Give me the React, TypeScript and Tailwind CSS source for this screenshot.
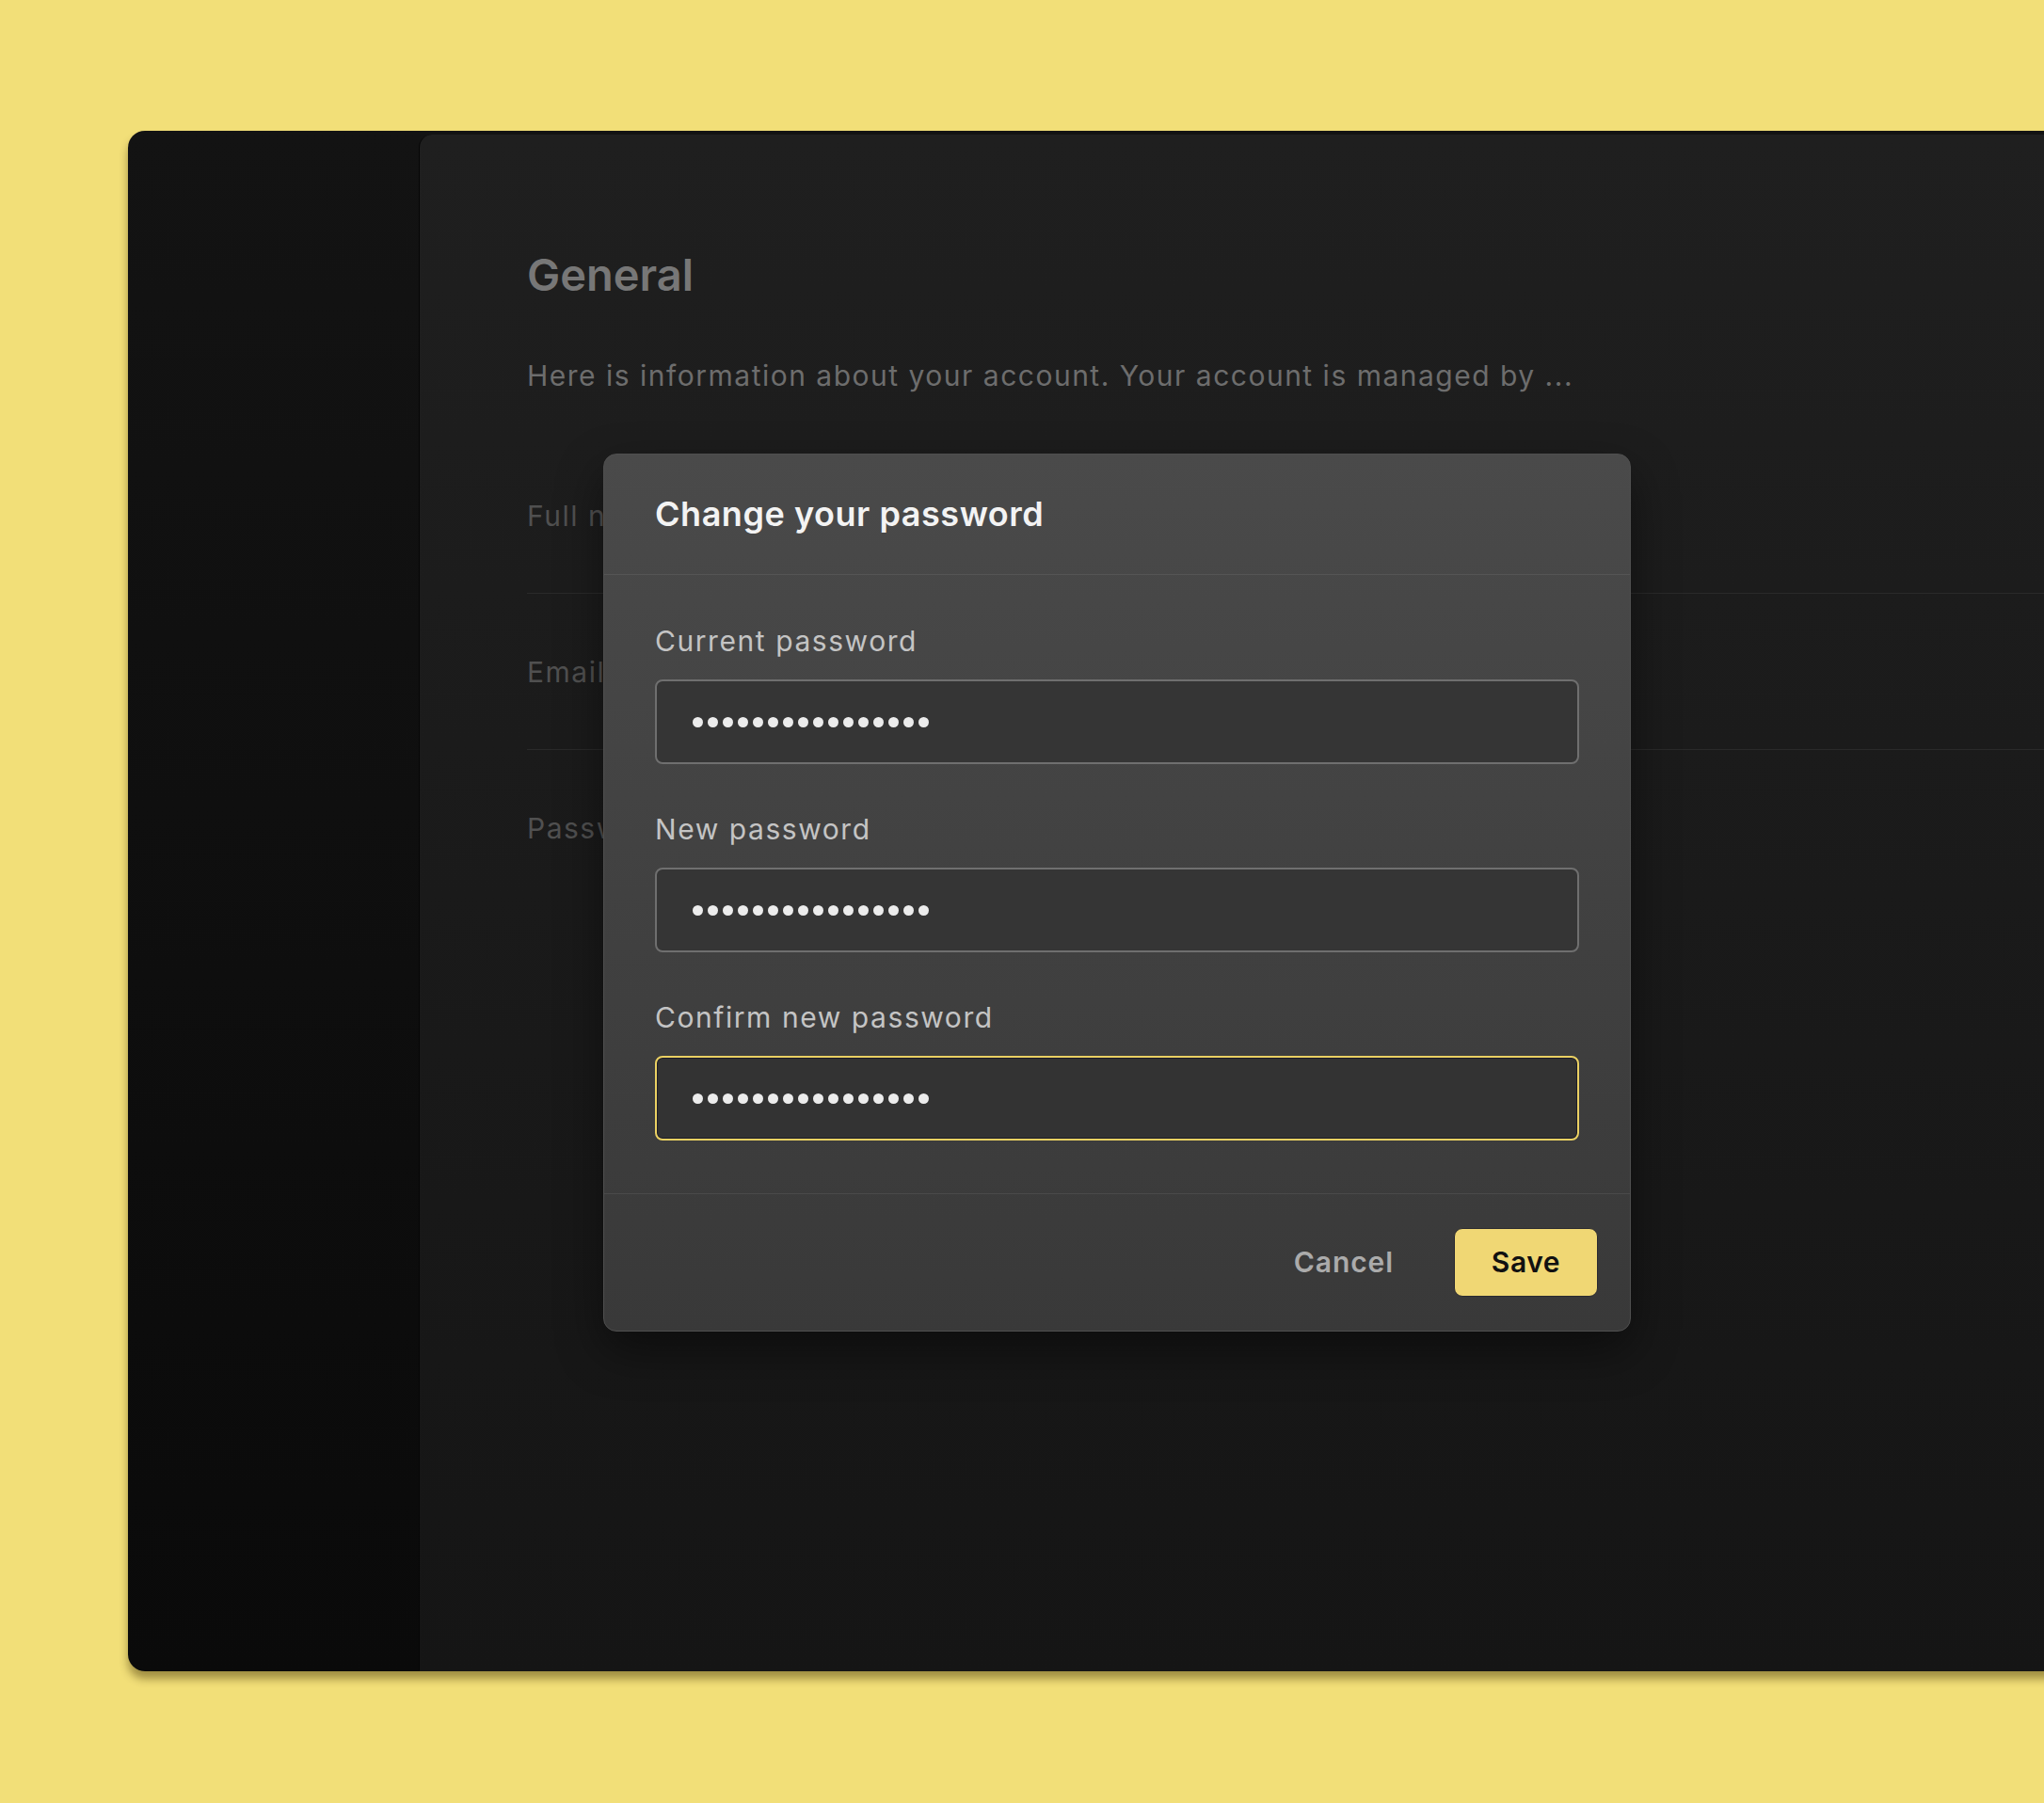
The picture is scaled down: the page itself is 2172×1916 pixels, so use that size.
const rows = ["Full name", "Email", "Password"];

const fields = [
  { id: 1, label: "Current password", focused: false },
  { id: 2, label: "New password", focused: false },
  { id: 3, label: "Confirm new password", focused: true },
];

const Dots = () => (
  <div className="flex items-center gap-[5px]">
    {Array.from({ length: 16 }).map((_, i) => (
      <span key={i} className="block w-[11px] h-[11px] rounded-full bg-[#ececec]" />
    ))}
  </div>
);

const PasswordModal = () => {
  return (
    <div className="absolute left-[641px] top-[482px] w-[1092px] rounded-[14px] border border-[#4f4f4f] bg-gradient-to-b from-[#4a4a4a] via-[#414141] to-[#393939] shadow-[0_20px_50px_rgba(0,0,0,0.45)] overflow-hidden">
      <div className="h-[128px] flex items-center px-[54px] border-b border-[#555555]">
        <h2 className="text-[36px] leading-[44px] font-semibold tracking-[0.015em] text-[#f3f3f3] pb-[2px]">
          Change your password
        </h2>
      </div>
      <div className="px-[54px] pt-[50px] pb-[56px] border-b border-[#4a4a4a] flex flex-col gap-[49px]">
        {fields.map((f) => (
          <div key={f.id} className="flex flex-col gap-[21px]">
            <label className="text-[30px] leading-[40px] tracking-[0.052em] text-[#c4c4c4]">{f.label}</label>
            <div
              className={
                f.focused
                  ? "h-[90px] rounded-[8px] border-2 border-[#ebd162] bg-[#333333] shadow-[inset_0_0_0_1px_#1c1c28] flex items-center pl-[38px]"
                  : "h-[90px] rounded-[8px] border-2 border-[#6f6f6f] bg-[#353535] flex items-center pl-[38px]"
              }
            >
              <Dots />
            </div>
          </div>
        ))}
      </div>
      <div className="h-[145px] flex items-center justify-end pr-[34px]">
        <button className="mr-[64px] text-[30px] font-semibold tracking-[0.03em] text-[#ababab]">Cancel</button>
        <button className="w-[153px] h-[73px] rounded-[9px] bg-[#f0d774] border border-[#2a2a30] text-[30px] font-semibold tracking-[0.02em] text-[#111111]">
          Save
        </button>
      </div>
    </div>
  );
};

export default function App() {
  return (
    <div className="relative w-[2172px] h-[1916px] overflow-hidden bg-[#f2df78] font-['Inter','Liberation_Sans',sans-serif]">
      <div className="ml-[136px] mt-[139px] w-[2200px] h-[1637px] flex rounded-[18px] bg-gradient-to-b from-[#131313] to-[#0a0a0a] shadow-[0_8px_10px_rgba(60,45,0,0.45)]">
        <aside className="w-[309px] shrink-0" />
        <main className="flex-1 mt-[4px] rounded-tl-[14px] border-l border-[#060606] bg-gradient-to-b from-[#1f1f1f] to-[#151515] pl-[114px] pt-[120px]">
          <h1 className="text-[47px] leading-[58px] font-semibold text-[#777777]">General</h1>
          <p className="mt-[60px] text-[30px] leading-[36px] tracking-[0.05em] text-[#6d6d6d]">
            Here is information about your account. Your account is managed by ...
          </p>
          <div className="mt-[48px]">
            {rows.map((r, i) => (
              <div
                key={r}
                className={
                  i < 2
                    ? "h-[166px] flex items-center border-b border-[#2a2a2a]"
                    : "h-[166px] flex items-center"
                }
              >
                <span className="text-[30px] leading-[36px] tracking-[0.05em] text-[#505050]">{r}</span>
              </div>
            ))}
          </div>
        </main>
      </div>
      <PasswordModal />
    </div>
  );
}
